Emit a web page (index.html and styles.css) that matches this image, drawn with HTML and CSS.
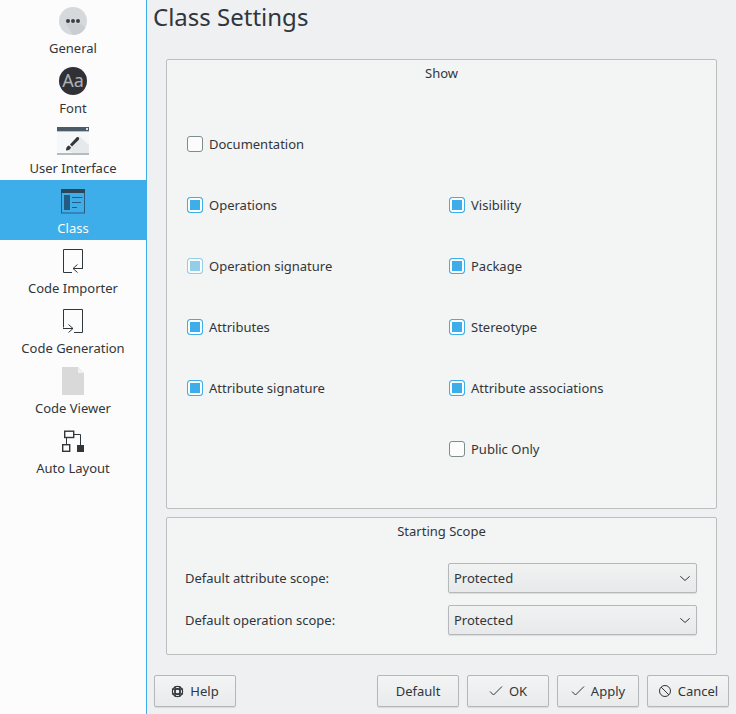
FILE: index.html
```html
<!DOCTYPE html>
<html lang="en">
<head>
    <meta charset="UTF-8">
    <meta name="viewport" content="width=device-width, initial-scale=1.0">
    <title>Class Settings</title>
    <link rel="stylesheet" href="styles.css">
</head>
<body>
<div class="app">
    <nav class="sidebar">
        <div class="nav-item">
            <svg class="nav-icon" viewBox="0 0 32 32" width="32" height="32">
                <circle cx="16" cy="16" r="14" fill="#d5d9dc"/>
                <path d="M9 18.500h14l5.500 4A14 14 0 0 1 16 30z" fill="#c9ced2"/>
                <circle cx="11" cy="16" r="2" fill="#3a4048"/><circle cx="16" cy="16" r="2" fill="#3a4048"/><circle cx="21" cy="16" r="2" fill="#3a4048"/>
            </svg>
            <span>General</span>
        </div>
        <div class="nav-item">
            <svg class="nav-icon" viewBox="0 0 32 32" width="32" height="32">
                <circle cx="16" cy="16" r="14" fill="#2f3136"/>
                <text x="16" y="22" text-anchor="middle" class="font-glyph">Aa</text>
            </svg>
            <span>Font</span>
        </div>
        <div class="nav-item">
            <svg class="nav-icon" viewBox="0 0 32 32" width="32" height="32">
                <rect x="0" y="2" width="32" height="28" fill="#f6f7f8"/>
                <path d="M22 11l10 9v8H16L9 25z" fill="#e6e9eb"/>
                <rect x="0" y="2" width="32" height="4" fill="#4d5b68"/>
                <rect x="0" y="6" width="32" height="1" fill="#9fc9e4"/>
                <rect x="29" y="3" width="2" height="2" fill="#dfe3e6"/>
                <rect x="0" y="28" width="32" height="2" fill="#b4bcc0"/>
                <path d="M9 25.500c0-2.800 1-4.500 3-5l2 2c-.6 2-2.400 3-5 3z" fill="#31363b"/>
                <path d="M13 19.500l6.500-7c1.500-1.300 3.500.6 2.300 2.200L15 21.500z" fill="#31363b"/>
            </svg>
            <span>User Interface</span>
        </div>
        <div class="nav-item active">
            <svg class="nav-icon" viewBox="0 0 32 32" width="32" height="32">
                <rect x="4.500" y="4.500" width="23" height="23.500" fill="#3daee9" stroke="#2a5d80"/>
                <rect x="4" y="4" width="24" height="4" fill="#2f4454"/>
                <rect x="7" y="10" width="6" height="15" fill="#245b80"/>
                <path d="M15 12.500h10.500M15 17.500h9M15 22.500h5" stroke="#245b80" fill="none"/>
            </svg>
            <span>Class</span>
        </div>
        <div class="nav-item">
            <svg class="nav-icon" viewBox="0 0 32 32" width="32" height="32">
                <path d="M15 27.500H6.500V4.500h19V23" stroke="#31363b" fill="none"/>
                <path d="M26 23.500H16M20.500 19.500l-4.500 4 4.500 4" stroke="#31363b" fill="none"/>
            </svg>
            <span>Code Importer</span>
        </div>
        <div class="nav-item">
            <svg class="nav-icon" viewBox="0 0 32 32" width="32" height="32">
                <path d="M6.500 22.500V4.500h19v23H17" stroke="#31363b" fill="none"/>
                <path d="M6 23.500h10M11.500 19.500l4.500 4-4.500 4" stroke="#31363b" fill="none"/>
            </svg>
            <span>Code Generation</span>
        </div>
        <div class="nav-item">
            <svg class="nav-icon" viewBox="0 0 32 32" width="32" height="32">
                <path d="M5 2h16l6 6v22H5z" fill="#d9d9d9"/>
                <path d="M21 2l6 6h-6z" fill="#f0f0f0"/>
            </svg>
            <span>Code Viewer</span>
        </div>
        <div class="nav-item">
            <svg class="nav-icon" viewBox="0 0 32 32" width="32" height="32">
                <rect x="7.700" y="6.200" width="9" height="6.300" fill="none" stroke="#31363b" stroke-width="1.400"/>
                <rect x="5.700" y="19.700" width="7" height="6.600" fill="none" stroke="#31363b" stroke-width="1.400"/>
                <rect x="20" y="20" width="7" height="7" fill="#31363b"/>
                <path d="M9.500 13v6M17 9.500h6.500V20" stroke="#31363b" fill="none"/>
            </svg>
            <span>Auto Layout</span>
        </div>
    </nav>

    <main class="content">
        <h1 class="page-title">Class Settings</h1>

        <section class="group show-group">
            <div class="group-title">Show</div>
            <div class="check-grid">
                <label class="check"><span class="box"></span>Documentation</label>
                <div></div>
                <label class="check"><span class="box on"></span>Operations</label>
                <label class="check"><span class="box on"></span>Visibility</label>
                <label class="check"><span class="box on dim"></span>Operation signature</label>
                <label class="check"><span class="box on"></span>Package</label>
                <label class="check"><span class="box on"></span>Attributes</label>
                <label class="check"><span class="box on"></span>Stereotype</label>
                <label class="check"><span class="box on"></span>Attribute signature</label>
                <label class="check"><span class="box on"></span>Attribute associations</label>
                <div></div>
                <label class="check"><span class="box"></span>Public Only</label>
            </div>
        </section>

        <section class="group scope-group">
            <div class="group-title">Starting Scope</div>
            <div class="scope-row">
                <span class="scope-label">Default attribute scope:</span>
                <div class="combo">Protected
                    <svg viewBox="0 0 10 5" width="10" height="5"><path d="M.3.3 5 4.500 9.700.3" fill="none" stroke="#31363b"/></svg>
                </div>
            </div>
            <div class="scope-row">
                <span class="scope-label">Default operation scope:</span>
                <div class="combo">Protected
                    <svg viewBox="0 0 10 5" width="10" height="5"><path d="M.3.3 5 4.500 9.700.3" fill="none" stroke="#31363b"/></svg>
                </div>
            </div>
        </section>

        <footer class="buttons">
            <button class="btn btn-help" type="button">
                <svg viewBox="0 0 14 14" width="13" height="13" fill="none" stroke="#31363b" stroke-width="1.300">
                    <circle cx="7" cy="7" r="3"/><circle cx="7" cy="7" r="5.500"/>
                    <path d="M4.500 1v12M9.500 1v12M1 4.500h12M1 9.500h12"/>
                </svg>
                Help
            </button>
            <div class="spacer"></div>
            <button class="btn btn-default" type="button">Default</button>
            <button class="btn" type="button">
                <svg viewBox="0 0 14 10" width="14" height="10"><path d="M1 5.500 4.500 9 13 .5" fill="none" stroke="#31363b"/></svg>
                OK
            </button>
            <button class="btn" type="button">
                <svg viewBox="0 0 14 10" width="14" height="10"><path d="M1 5.500 4.500 9 13 .5" fill="none" stroke="#31363b"/></svg>
                Apply
            </button>
            <button class="btn" type="button">
                <svg viewBox="0 0 14 14" width="14" height="14" fill="none" stroke="#31363b"><circle cx="7" cy="7" r="5.500"/><path d="M3 3l8 8"/></svg>
                Cancel
            </button>
        </footer>
    </main>
</div>
</body>
</html>
```

FILE: styles.css
```css
* {
    box-sizing: border-box;
}

body {
    margin: 0;
    background-color: #eff0f1;
    color: #31363b;
    font-family: "Noto Sans", sans-serif;
    font-size: 13px;
    overflow: hidden;
}

.app {
    display: flex;
    width: 736px;
    height: 714px;
}

.sidebar {
    width: 147px;
    flex: none;
    background-color: #fcfcfc;
    border-right: 1px solid #3daee9;
}

.nav-item {
    height: 60px;
    display: flex;
    flex-direction: column;
    align-items: center;
    padding-top: 5px;
}

.nav-item span {
    margin-top: 2px;
    line-height: 18px;
    white-space: nowrap;
}

.nav-item.active {
    background-color: #3daee9;
    color: #fcfcfc;
}

.nav-icon {
    display: block;
}

.font-glyph {
    font-family: "Noto Sans", sans-serif;
    font-size: 18px;
    fill: #aeb1b4;
}

.content {
    flex: 1;
    display: flex;
    flex-direction: column;
    padding: 0 7px 0 6px;
}

.page-title {
    margin: 0;
    height: 59px;
    font-size: 24px;
    font-weight: normal;
    line-height: 34px;
}

.group {
    margin: 0 12px 0 13px;
    background-color: #f3f4f4;
    border: 1px solid #bcbebf;
    border-radius: 2px;
}

.group-title {
    text-align: center;
    line-height: 18px;
    padding-top: 4px;
}

.show-group {
    height: 450px;
    margin-bottom: 8px;
}

.check-grid {
    display: grid;
    grid-template-columns: 262px 1fr;
    grid-auto-rows: 61px;
    padding: 31px 0 0 20px;
    align-items: center;
}

.check {
    display: flex;
    align-items: center;
    gap: 6px;
}

.box {
    width: 16px;
    height: 16px;
    background-color: #fcfcfc;
    border: 1px solid #7f8c8d;
    border-radius: 3px;
}

.box.on {
    border-color: #3daee9;
    background-color: #3daee9;
    box-shadow: inset 0 0 0 2px #fcfcfc;
}

.box.dim {
    border-color: #93cee9;
    background-color: #93cee9;
}

.scope-group {
    height: 138px;
}

.scope-group .group-title {
    margin-bottom: 22px;
}

.scope-row {
    display: flex;
    align-items: center;
    height: 32px;
    margin-bottom: 10px;
    padding-left: 18px;
}

.scope-label {
    width: 263px;
}

.combo {
    width: 249px;
    height: 30px;
    display: flex;
    align-items: center;
    justify-content: space-between;
    padding: 0 6px 0 5px;
    background: linear-gradient(#f1f2f2, #e8e9ea);
    border: 1px solid #b5b7b8;
    border-radius: 2px;
    box-shadow: 0 1px 1px rgba(0, 0, 0, 0.1);
}

.buttons {
    display: flex;
    gap: 8px;
    margin-top: 20px;
    padding-left: 1px;
}

.spacer {
    flex: 1;
}

.btn {
    width: 82px;
    height: 32px;
    display: flex;
    align-items: center;
    justify-content: center;
    gap: 6px;
    padding: 0;
    background: linear-gradient(#f3f4f4, #e9eaeb);
    border: 1px solid #b5b7b8;
    border-radius: 2px;
    box-shadow: 0 1px 1px rgba(0, 0, 0, 0.1);
    color: #31363b;
    font-family: "Noto Sans", sans-serif;
    font-size: 13px;
}
```
